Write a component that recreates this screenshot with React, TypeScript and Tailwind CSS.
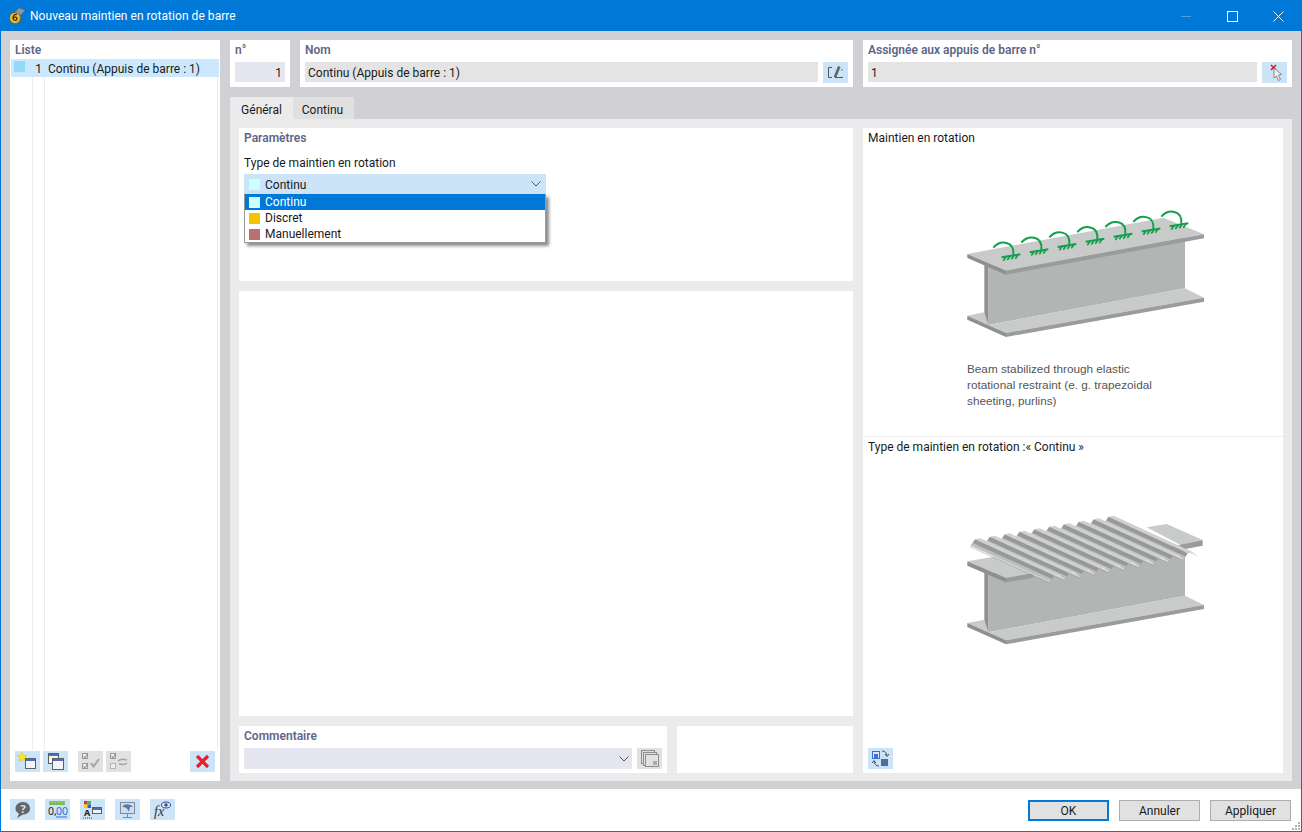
import type { ReactNode } from "react";

const labelCls = "text-[12px] leading-[16px] font-semibold text-[#5d6687]";

function IconBtn({ children, off }: { children: ReactNode; off?: boolean }) {
  return (
    <div className={`w-[25px] h-[21px] shrink-0 ${off ? "bg-[#e1e1e1]" : "bg-[#cce4f7]"}`}>
      <svg width="25" height="21" viewBox="0 0 25 21">
        {children}
      </svg>
    </div>
  );
}

function Win({ x, y, w = 10, h = 10 }: { x: number; y: number; w?: number; h?: number }) {
  return (
    <g>
      <rect x={x + 0.5} y={y + 0.5} width={w} height={h} fill="#f4f4f4" stroke="#5f5f5f" />
      <rect x={x + 1} y={y + 1} width={w - 1} height="2" fill="#4a6fc0" />
    </g>
  );
}

function Chevron() {
  return (
    <svg width="10" height="6" viewBox="0 0 10 6" className="shrink-0">
      <path d="M0.5 0.5 L5 5 L9.5 0.5" fill="none" stroke="#555" strokeWidth="1" />
    </svg>
  );
}

function Swatch({ color }: { color: string }) {
  return <span className="w-[11px] h-[11px] shrink-0" style={{ background: color }} />;
}

function TopFlange() {
  return (
    <g>
      <polygon points="52,177 640,68 762,118 168,227" fill="#c9caca" />
      <polygon points="52,177 168,227 168,239 52,189" fill="#8e8f8f" />
      <polygon points="168,227 762,118 762,130 168,239" fill="#9a9b9b" />
    </g>
  );
}

function BeamBody({ dy = 0 }: { dy?: number }) {
  return (
    <g transform={`translate(0 ${dy})`}>
      <polygon points="115,215 705,125 705,280 115,390" fill="#b3b4b4" />
      <polygon points="103,210 115,215 115,390 103,378" fill="#8f9090" />
      <polygon points="52,362 103,352 115,390 705,280 762,308 168,414" fill="#c9caca" />
      <polygon points="52,362 168,414 168,426 52,374" fill="#8e8f8f" />
      <polygon points="168,414 762,308 762,320 168,426" fill="#9a9b9b" />
    </g>
  );
}

function Spring({ i }: { i: number }) {
  const dx = i * 84;
  const dy = i * -15.5;
  return (
    <g transform={`translate(${dx} ${dy})`} fill="none" stroke="#12a04c">
      <path d="M130 158 C150 135 194 136 190 180" strokeWidth="6" />
      <path d="M155 187 L211 178" strokeWidth="6" />
      <path d="M160 197 L169 184 M172 195 L181 182 M184 193 L193 180 M196 191 L205 178" strokeWidth="5" />
    </g>
  );
}

function BeamSprings() {
  return (
    <svg width="270" height="150" viewBox="0 0 810 450" className="shrink-0">
      <BeamBody />
      <TopFlange />
      {[0, 1, 2, 3, 4, 5, 6].map((i) => (
        <Spring key={i} i={i} />
      ))}
    </svg>
  );
}

function BeamDeck() {
  return (
    <svg width="270" height="150" viewBox="0 0 810 450" className="shrink-0">
      <BeamBody dy={-5} />
      <polygon points="52,172 150,155 260,205 168,222" fill="#c9caca" />
      <polygon points="52,172 168,222 168,235 52,185" fill="#8e8f8f" />
      <polygon points="168,222 250,208 250,221 168,235" fill="#9a9b9b" />
      <polygon points="590,70 650,60 758,108 690,122" fill="#c9caca" />
      <polygon points="690,122 758,108 758,125 690,138" fill="#9a9b9b" />
      {[9, 8, 7, 6, 5, 4, 3, 2, 1, 0].map((i) => (
        <g key={i} transform={`translate(${i * 44.5} ${i * -7.5})`}>
          {/* pan running to the next rib */}
          <polygon points="90,103 106,117 344,226 328,212" fill="#dcdddd" />
          {/* crest */}
          <polygon points="75,106 90,103 328,212 313,215" fill="#cfd0d0" />
          {/* shaded slope */}
          <polygon points="62,125 75,106 313,215 300,234" fill="#979898" />
          <polygon points="62,125 68,116 306,225 300,234" fill="#bdbebe" />
          {/* lip */}
          <path d="M62 125 L300 234" stroke="#eeeeee" strokeWidth="2" />
          <path d="M60 128 L298 237 L304 232" fill="none" stroke="#9a9b9b" strokeWidth="1.5" />
        </g>
      ))}
    </svg>
  );
}

export default function App() {
  return (
    <div className="w-[1302px] h-[832px] flex flex-col border border-[#0078d7] bg-white text-[12px] leading-[16px] text-[#1a1a1a] overflow-hidden font-['Roboto',sans-serif]">
      {/* title bar */}
      <div className="h-[30px] shrink-0 bg-[#0078d7] flex items-center text-white">
        <svg width="18" height="18" viewBox="0 0 18 18" className="ml-[7px] mr-[4px] shrink-0">
          <path d="M6 6 L11 1 L17 3 L13 8 Z" fill="#8d97a8" stroke="#5f6978" strokeWidth="0.5" />
          <circle cx="7" cy="11" r="5.5" fill="#f2c230" stroke="#7a5a10" strokeWidth="0.8" />
          <path d="M9 7.5 C6 7 4.8 9.5 5 11.5 C5.2 14 9 14 9 11.5 C9 9.8 6.5 9.8 5.4 11" fill="none" stroke="#3a2c08" strokeWidth="1.3" />
        </svg>
        <span className="tracking-[0.05px]">Nouveau maintien en rotation de barre</span>
        <div className="ml-auto flex">
          <div className="w-[46px] h-[30px] flex items-center justify-center">
            <span className="w-[10px] h-px bg-[#4a9fe3]" />
          </div>
          <div className="w-[46px] h-[30px] flex items-center justify-center">
            <span className="w-[11px] h-[11px] border border-white" />
          </div>
          <div className="w-[46px] h-[30px] flex items-center justify-center">
            <svg width="11" height="11" viewBox="0 0 11 11">
              <path d="M0.5 0.5 L10.5 10.5 M10.5 0.5 L0.5 10.5" stroke="#fff" strokeWidth="1" />
            </svg>
          </div>
        </div>
      </div>

      {/* body */}
      <div className="flex-1 min-h-0 bg-[#d1d0d5] flex gap-[10px] pl-[9px] pr-[9px] pt-[9px] pb-[8px]">
        {/* list panel */}
        <div className="w-[210px] shrink-0 bg-white flex flex-col px-px relative">
          <div className={`${labelCls} pl-[4px] pt-[2px] h-[19px]`}>Liste</div>
          <div className="h-[18px] bg-[#cce8ff] flex items-center pt-[2px]">
            <span className="ml-[3px] w-[11px] h-[11px] mb-[5px] bg-[#96d8f7]" />
            <span className="w-[17px] text-right">1</span>
            <span className="ml-[6px]">Continu (Appuis de barre : 1)</span>
          </div>
          <div className="flex-1 min-h-0 flex">
            <div className="w-[22px] h-full border-r border-[#ececec]" />
            <div className="w-[12px] h-full border-r border-[#ececec]" />
            <div className="flex-1 h-full border-r border-[#ececec] mr-px" />
          </div>
          <div className="h-[31px] flex pl-[4px] gap-[3px] relative bg-white pt-px">
            <IconBtn>
              <Win x={10} y={7} />
              <path d="M7 1 L8.4 4.3 L12 4.6 L9.3 6.9 L10.1 10.4 L7 8.6 L3.9 10.4 L4.7 6.9 L2 4.6 L5.6 4.3 Z" fill="#f6e71f" stroke="#d1b90c" strokeWidth="0.4" />
            </IconBtn>
            <IconBtn>
              <Win x={5} y={2} w={10} h={10} />
              <Win x={9} y={7} w={11} h={11} />
            </IconBtn>
            <span className="w-[4px]" />
            <IconBtn off>
              <rect x="4.5" y="2.5" width="5" height="5" fill="#eee" stroke="#9a9a9a" />
              <rect x="4.5" y="12.5" width="5" height="5" fill="#eee" stroke="#9a9a9a" />
              <path d="M5.5 5 L7 7 L10 2 M5.5 15 L7 17 L10 12" fill="none" stroke="#888" />
              <path d="M13 12 L15.5 15.5 L21 8" fill="none" stroke="#a5a5a5" strokeWidth="2" />
            </IconBtn>
            <IconBtn off>
              <rect x="4.5" y="2.5" width="5" height="5" fill="#eee" stroke="#9a9a9a" />
              <rect x="4.5" y="12.5" width="5" height="5" fill="#eee" stroke="#b5b5b5" />
              <path d="M5.5 5 L7 7 L10 2" fill="none" stroke="#888" />
              <path d="M12 10 C15 7 18 8 21 9 M21 12 C18 15 15 13 13 13" fill="none" stroke="#a5a5a5" strokeWidth="1.5" />
            </IconBtn>
            <span className="flex-1" />
            <div className="mr-[4px]">
              <IconBtn>
                <path d="M7 5 L18 16 M18 5 L7 16" stroke="#ee1c25" strokeWidth="3.2" />
              </IconBtn>
            </div>
          </div>
        </div>

        {/* right column */}
        <div className="flex-1 min-w-0 flex flex-col">
          <div className="h-[47px] shrink-0 flex gap-[10px]">
            <div className="w-[60px] bg-white px-[5px] pt-px">
              <div className={`${labelCls} h-[21px] pt-px`}>n°</div>
              <div className="h-[20px] bg-[#e6e6f0] flex items-center justify-end px-[3px] pt-[2px]">1</div>
            </div>
            <div className="w-[553px] bg-white px-[5px] pt-px">
              <div className={`${labelCls} h-[21px] pt-px`}>Nom</div>
              <div className="flex gap-[5px]">
                <div className="flex-1 h-[20px] bg-[#e4e4e4] flex items-center px-[3px] pt-[2px]">Continu (Appuis de barre : 1)</div>
                <IconBtn>
                  <path d="M9 5.5 H5.5 V15.5 H9 M12 15.5 H20" fill="none" stroke="#555" strokeWidth="1" />
                  <path d="M11 14 L15 4 L17.5 5 L13.5 15 L11 15.5 Z" fill="#666" />
                  <path d="M18 8 H20" stroke="#777" strokeWidth="1" />
                </IconBtn>
              </div>
            </div>
            <div className="flex-1 min-w-0 bg-white px-[5px] pt-px">
              <div className={`${labelCls} h-[21px] pt-px`}>Assignée aux appuis de barre n°</div>
              <div className="flex gap-[5px]">
                <div className="flex-1 h-[20px] bg-[#e4e4e4] flex items-center px-[3px] pt-[2px]">1</div>
                <IconBtn>
                  <path d="M9 3 L14 8 M14 3 L9 8" stroke="#e8132a" strokeWidth="1.6" />
                  <path d="M12 6 L12 16 L14.5 14 L16.5 18.5 L18.5 17.5 L16.5 13 L19.5 12.5 Z" fill="#f2f2f2" stroke="#6f6f6f" strokeWidth="0.8" />
                </IconBtn>
              </div>
            </div>
          </div>

          {/* tabs */}
          <div className="mt-[10px] h-[22px] shrink-0 flex">
            <div className="w-[63px] bg-[#ebebeb] flex items-center justify-center pt-[4px]">Général</div>
            <div className="w-[61px] bg-[#e0e0e0] flex items-center justify-center pt-[4px] pr-[2px]">Continu</div>
          </div>

          <div className="flex-1 min-h-0 bg-[#ebebeb] flex gap-[10px] pl-[9px] pr-[9px] pt-[9px] pb-[8px]">
            <div className="w-[614px] shrink-0 flex flex-col gap-[10px]">
              {/* parameters */}
              <div className="h-[153px] shrink-0 bg-white px-[5px] pt-[2px] relative">
                <div className={`${labelCls} h-[18px]`}>Paramètres</div>
                <div className="mt-[7px] h-[17px]">Type de maintien en rotation</div>
                <div className="mt-[2px] w-[302px] h-[20px] bg-[#cce4f7] flex items-center pl-[5px] pr-[5px]">
                  <Swatch color="#ccffff" />
                  <span className="ml-[5px] pt-[2px]">Continu</span>
                  <span className="ml-auto flex">
                    <Chevron />
                  </span>
                </div>
                {/* open dropdown */}
                <div className="absolute left-[5px] top-[66px] w-[302px] h-[49px] bg-white border border-[#9a9a9a] border-t-0 shadow-[3px_3px_3px_rgba(0,0,0,0.45)]">
                  <div className="h-[16px] bg-[#0078d7] text-white flex items-center pl-[4px]">
                    <Swatch color="#ccffff" />
                    <span className="ml-[5px]">Continu</span>
                  </div>
                  <div className="h-[16px] flex items-center pl-[4px]">
                    <Swatch color="#f5c400" />
                    <span className="ml-[5px]">Discret</span>
                  </div>
                  <div className="h-[16px] flex items-center pl-[4px]">
                    <Swatch color="#b87070" />
                    <span className="ml-[5px]">Manuellement</span>
                  </div>
                </div>
              </div>
              <div className="flex-1 min-h-0 bg-white" />
              <div className="h-[47px] shrink-0 flex gap-[10px]">
                <div className="w-[428px] bg-white px-[5px] pt-px">
                  <div className={`${labelCls} h-[21px] pt-px`}>Commentaire</div>
                  <div className="flex gap-[5px]">
                    <div className="flex-1 h-[21px] bg-[#e6e6f0] flex items-center justify-end pr-[3px]">
                      <Chevron />
                    </div>
                    <IconBtn off>
                      <rect x="4.5" y="2.5" width="13" height="13" fill="none" stroke="#8d8d8d" />
                      <rect x="6.5" y="4.5" width="13" height="13" fill="#e1e1e1" stroke="#8d8d8d" />
                      <rect x="8.5" y="6.5" width="13" height="12" fill="#e1e1e1" stroke="#8d8d8d" />
                      <rect x="16" y="13" width="4" height="4" fill="#aaa" />
                    </IconBtn>
                  </div>
                </div>
                <div className="flex-1 bg-white" />
              </div>
            </div>

            {/* illustrations */}
            <div className="flex-1 min-w-0 bg-white flex flex-col">
              <div className="h-[309px] shrink-0 border-b border-[#ebebeb] flex flex-col px-[5px] pt-[2px]">
                <div className="h-[16px]">Maintien en rotation</div>
                <div className="ml-[82px] mt-[49px]">
                  <BeamSprings />
                </div>
                <p className="ml-[99px] mt-[16px] w-[200px] text-[11.75px] leading-[16px] text-[#555] font-['Liberation_Sans',sans-serif]">
                  Beam stabilized through elastic rotational restraint (e. g. trapezoidal sheeting, purlins)
                </p>
              </div>
              <div className="flex-1 min-h-0 flex flex-col px-[5px] pt-[2px]">
                <div className="h-[16px]">Type de maintien en rotation :« Continu »</div>
                <div className="ml-[82px] mt-[49px]">
                  <BeamDeck />
                </div>
                <div className="mt-auto mb-[4px]">
                  <IconBtn>
                    <rect x="4.5" y="3.5" width="7" height="7" fill="#d8e6fa" stroke="#3d6fd8" />
                    <rect x="6" y="6" width="4" height="4" fill="#3d6fd8" />
                    <rect x="13" y="11" width="7" height="7" fill="#4b6f9f" />
                    <path d="M14 3 C17 3 19 5 19 8 M17 6 L19 8.5 L21 6 M11 18 C8 18 6 16 6 13 M4 15 L6 12.5 L8 15" fill="none" stroke="#555" strokeWidth="1" />
                  </IconBtn>
                </div>
              </div>
            </div>
          </div>
        </div>
      </div>

      {/* footer */}
      <div className="h-[42px] shrink-0 flex items-start pt-[10px] pl-[9px] pr-[10px] relative">
        <div className="flex gap-[10px]">
          <IconBtn>
            <path d="M13 3 C17.5 3 20 6 20 9.5 C20 13 17 15.5 13 15.5 L7 19 L9 14.5 C6.5 13.5 5.5 11.5 5.5 9.5 C5.5 6 8.5 3 13 3 Z" fill="#666" />
            <text x="13" y="13.5" textAnchor="middle" fontSize="11" fontWeight="700" fill="#cce4f7" fontFamily="Noto Sans">?</text>
          </IconBtn>
          <IconBtn>
            <rect x="4" y="2" width="16" height="4" fill="#90c060" />
            <path d="M6 4 V6 M9 4 V6 M12 4 V6 M15 4 V6 M18 4 V6" stroke="#5f8f3a" strokeWidth="0.7" />
            <text x="3" y="16" fontSize="10.5" fill="#222" fontFamily="Noto Sans">0,</text>
            <text x="11" y="16" fontSize="10.5" fill="#2b6fd6" fontFamily="Noto Sans">00</text>
            <path d="M11 18 H22" stroke="#2b6fd6" strokeWidth="1" />
          </IconBtn>
          <IconBtn>
            <rect x="4" y="2" width="3.5" height="3.5" fill="#d93030" />
            <rect x="7.5" y="2" width="3.5" height="3.5" fill="#59b13a" />
            <rect x="4" y="5.5" width="3.5" height="3.5" fill="#f2d02c" />
            <rect x="7.5" y="5.5" width="3.5" height="3.5" fill="#3460c8" />
            <text x="4" y="17" fontSize="9" fontWeight="700" fill="#222" fontFamily="Noto Sans">A</text>
            <path d="M3 19 H12" stroke="#444" strokeDasharray="1 1" />
            <Win x={12} y={8} w={9} h={6} />
          </IconBtn>
          <IconBtn>
            <rect x="5.5" y="3.5" width="14" height="11" fill="#d4dde8" stroke="#7f8b99" />
            <path d="M7 8 C10 4 15 5 18 8 L15 8 L14 13 C13 10 11 8 7 8 Z" fill="#4a7fae" />
            <path d="M12.5 15 V18 M8 18.5 H17" stroke="#7f8b99" />
          </IconBtn>
          <IconBtn>
            <text x="4" y="17" fontSize="14" fontStyle="italic" fill="#333" fontFamily="Liberation Serif">fx</text>
            <ellipse cx="16" cy="6" rx="4.5" ry="3" fill="#dfe6f3" stroke="#3b4f8c" />
            <circle cx="16" cy="6" r="1.7" fill="#3b4f8c" />
          </IconBtn>
        </div>
        <div className="ml-auto flex gap-[10px] pt-px">
          <button className="w-[81px] h-[21px] bg-[#e1e1e1] border-2 border-[#0078d7] leading-none">OK</button>
          <button className="w-[81px] h-[21px] bg-[#e1e1e1] border border-[#adadad] leading-none">Annuler</button>
          <button className="w-[81px] h-[21px] bg-[#e1e1e1] border border-[#adadad] leading-none">Appliquer</button>
        </div>
        <svg width="10" height="10" viewBox="0 0 10 10" className="absolute right-0 bottom-0">
          <path d="M7 1h2v2H7z M4 4h2v2H4z M7 4h2v2H7z M1 7h2v2H1z M4 7h2v2H4z M7 7h2v2H7z" fill="#b5b5b5" />
        </svg>
      </div>
    </div>
  );
}
